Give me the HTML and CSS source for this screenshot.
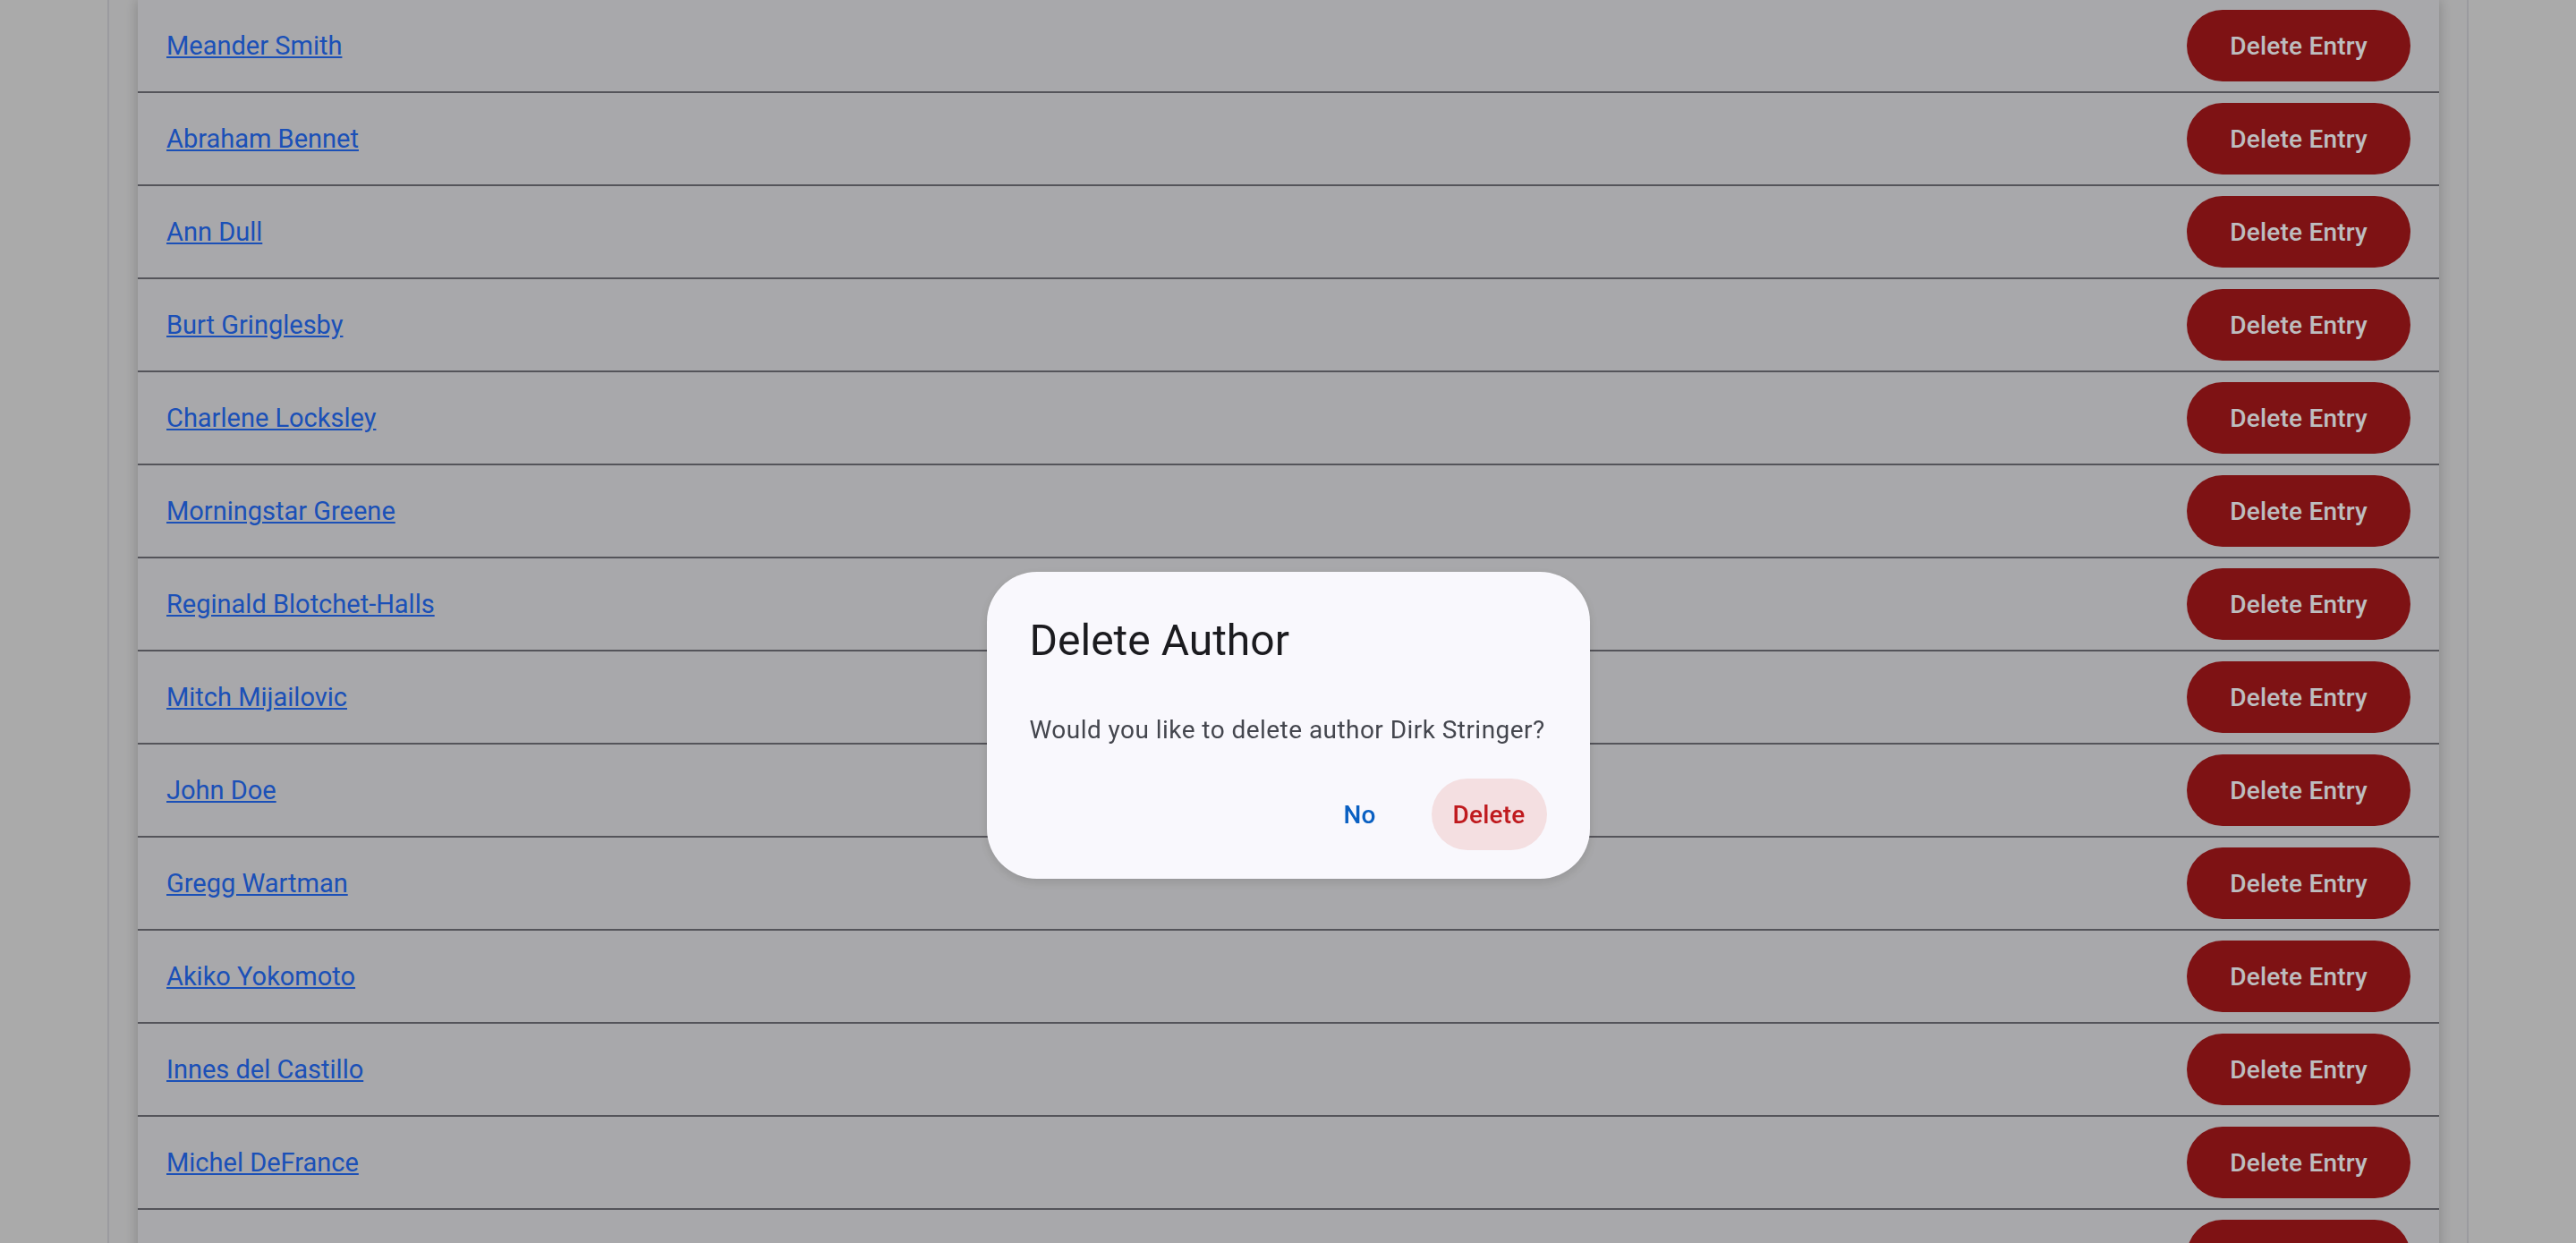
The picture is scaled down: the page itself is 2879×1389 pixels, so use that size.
FILE: index.html
```html
<!DOCTYPE html>
<html lang="en">
<head>
<meta charset="utf-8">
<title>Authors</title>
<link rel="stylesheet" href="styles.css">
</head>
<body>
<div class="page">
  <div class="card">
    <div class="row"><a class="name" href="#">Meander Smith</a><button class="del">Delete Entry</button></div>
    <div class="row"><a class="name" href="#">Abraham Bennet</a><button class="del">Delete Entry</button></div>
    <div class="row"><a class="name" href="#">Ann Dull</a><button class="del">Delete Entry</button></div>
    <div class="row"><a class="name" href="#">Burt Gringlesby</a><button class="del">Delete Entry</button></div>
    <div class="row"><a class="name" href="#">Charlene Locksley</a><button class="del">Delete Entry</button></div>
    <div class="row"><a class="name" href="#">Morningstar Greene</a><button class="del">Delete Entry</button></div>
    <div class="row"><a class="name" href="#">Reginald Blotchet-Halls</a><button class="del">Delete Entry</button></div>
    <div class="row"><a class="name" href="#">Mitch Mijailovic</a><button class="del">Delete Entry</button></div>
    <div class="row"><a class="name" href="#">John Doe</a><button class="del">Delete Entry</button></div>
    <div class="row"><a class="name" href="#">Gregg Wartman</a><button class="del">Delete Entry</button></div>
    <div class="row"><a class="name" href="#">Akiko Yokomoto</a><button class="del">Delete Entry</button></div>
    <div class="row"><a class="name" href="#">Innes del Castillo</a><button class="del">Delete Entry</button></div>
    <div class="row"><a class="name" href="#">Michel DeFrance</a><button class="del">Delete Entry</button></div>
    <div class="row"><a class="name" href="#">Dirk Stringer</a><button class="del">Delete Entry</button></div>
  </div>
</div>
<div class="scrim"></div>
<div class="dialog" role="dialog">
  <h2 class="dlg-title">Delete Author</h2>
  <p class="dlg-body">Would you like to delete author Dirk Stringer?</p>
  <div class="dlg-actions">
    <button class="txt-btn">No</button>
    <button class="txt-btn danger">Delete</button>
  </div>
</div>
</body>
</html>
```
FILE: styles.css
```css
html, body {
  margin: 0;
  padding: 0;
  height: 100%;
  overflow: hidden;
}
body {
  background: #e3e3e3;
  font-family: Roboto, "Noto Sans", "Liberation Sans", sans-serif;
}
.page {
  margin: 0 120px;
  min-height: 100vh;
  border-left: 2px solid #cfcfd5;
  border-right: 2px solid #cfcfd5;
  background: #e1e1e2;
  padding: 0 31px 0 32px;
}
.card {
  background: #e1e1e4;
  box-shadow: 0 0 14px rgba(0, 0, 0, 0.22);
}
.row {
  height: 102px;
  border-bottom: 2px solid #717078;
  display: flex;
  align-items: center;
  justify-content: space-between;
  padding: 0 32px;
}
.name {
  font-size: 29px;
  color: #256bf5;
  text-decoration: underline;
  text-underline-offset: 2px;
}
.del {
  height: 80px;
  padding: 0 48px;
  border: none;
  border-radius: 40px;
  background: #a8181b;
  color: #fcfcff;
  font-family: Roboto, "Noto Sans", "Liberation Sans", sans-serif;
  font-weight: 500;
  font-size: 28px;
  letter-spacing: 0.2px;
}
.scrim {
  position: fixed;
  inset: 0;
  background: rgba(0, 0, 0, 0.25);
}
.dialog {
  position: fixed;
  top: 639px;
  left: 50%;
  margin-left: -337px;
  width: 674px;
  box-sizing: border-box;
  padding: 48px 48px 32px 48px;
  background: #f9f8fd;
  border-radius: 56px;
  box-shadow: 0 4px 12px rgba(0, 0, 0, 0.12);
}
.dlg-title {
  margin: 0;
  font-size: 48px;
  font-weight: 400;
  line-height: normal;
  color: #1b1b1f;
}
.dlg-body {
  margin: 52px 0 0 0;
  font-size: 28px;
  line-height: 40px;
  letter-spacing: 0.45px;
  white-space: nowrap;
  color: #44464e;
}
.dlg-actions {
  margin-top: 34px;
  display: flex;
  justify-content: flex-end;
  gap: 16px;
}
.txt-btn {
  min-width: 128px;
  height: 80px;
  padding: 0 24px;
  border: none;
  border-radius: 40px;
  background: transparent;
  color: #0a60c2;
  font-family: Roboto, "Noto Sans", "Liberation Sans", sans-serif;
  font-weight: 500;
  font-size: 28px;
  letter-spacing: 0.2px;
}
.txt-btn.danger {
  background: #f4dfe1;
  color: #bf1a1e;
}
```
